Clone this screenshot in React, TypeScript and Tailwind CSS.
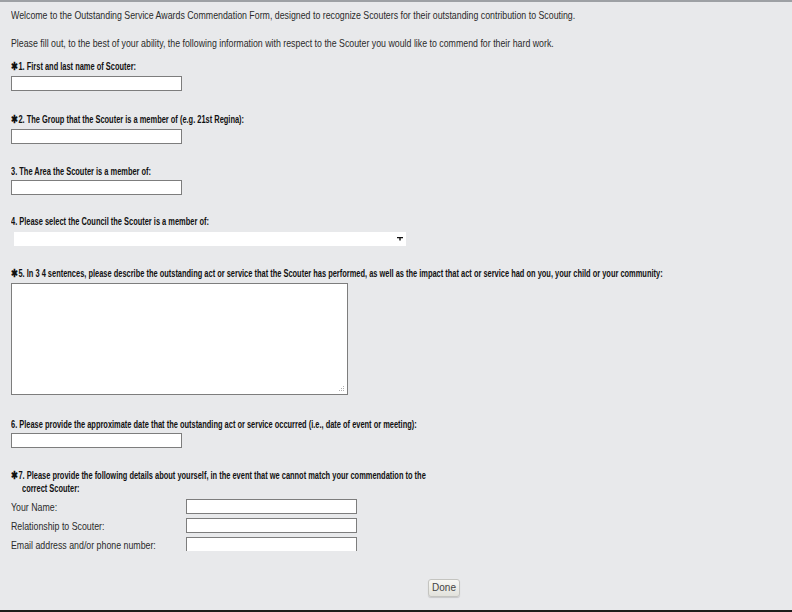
import React from 'react'

const font = { fontFamily: '"Liberation Sans", Arial, sans-serif' }

function Plain({ children }: { children: React.ReactNode }) {
  return (
    <div className="block w-max origin-left scale-x-[0.8] whitespace-nowrap text-[11px] leading-[14px] text-[#2a2a2a]">
      {children}
    </div>
  )
}

function Label({ req, children }: { req?: boolean; children: React.ReactNode }) {
  return (
    <div className="w-max h-[14px] origin-left scale-x-[0.745] whitespace-nowrap text-[10px] leading-[14px] font-bold text-[#111]">
      {req && <span className="text-[11px] mr-[1px]">✱</span>}
      {children}
    </div>
  )
}

function Field({ className = '' }: { className?: string }) {
  return <div className={`h-[15px] w-[171px] bg-white border border-[#7d7d7d] ${className}`} />
}

export default function App() {
  return (
    <div style={font} className="w-[792px] h-[612px] bg-[#e8e9eb] border-t-2 border-t-[#9da0a4] border-b-2 border-b-[#1c1c1c] flex flex-col overflow-hidden text-[11px] leading-[14px]">
      <div className="h-[549px] overflow-hidden px-[11px]">
        <div className="mt-[6px]">
          <Plain>
            Welcome to the Outstanding Service Awards Commendation Form, designed to recognize Scouters for their outstanding contribution to Scouting.
          </Plain>
        </div>
        <div className="mt-[14px]">
          <Plain>
            Please fill out, to the best of your ability, the following information with respect to the Scouter you would like to commend for their hard work.
          </Plain>
        </div>

        <div className="mt-[9px]">
          <Label req>1. First and last name of Scouter:</Label>
          <Field className="mt-[3px]" />
        </div>

        <div className="mt-[21px]">
          <Label req>2. The Group that the Scouter is a member of (e.g. 21st Regina):</Label>
          <Field className="mt-[3px]" />
        </div>

        <div className="mt-[21px]">
          <Label>3. The Area the Scouter is a member of:</Label>
          <Field className="mt-[1px]" />
        </div>

        <div className="mt-[20px]">
          <Label>4. Please select the Council the Scouter is a member of:</Label>
          <div className="mt-[3px] ml-[3px] h-[14px] w-[392px] bg-white flex items-center justify-end pr-[3px]">
            <svg width="6" height="4" viewBox="0 0 6 4">
              <path d="M0 0.5h6M3 0.5v3" stroke="#111" strokeWidth="1.4" fill="none" />
            </svg>
          </div>
        </div>

        <div className="mt-[20px]">
          <Label req>
            5. In 3 4 sentences, please describe the outstanding act or service that the Scouter has performed, as well as the impact that act or service had on you, your child or your community:
          </Label>
          <div className="mt-[3px] relative h-[112px] w-[337px] bg-white border border-[#7d7d7d]">
            <svg className="absolute right-[2px] bottom-[2px]" width="6" height="6" viewBox="0 0 6 6">
              <rect x="4" y="0" width="1" height="1" fill="#b0b0b0" />
              <rect x="4" y="2" width="1" height="1" fill="#b0b0b0" />
              <rect x="2" y="2" width="1" height="1" fill="#b0b0b0" />
              <rect x="4" y="4" width="1" height="1" fill="#b0b0b0" />
              <rect x="2" y="4" width="1" height="1" fill="#b0b0b0" />
              <rect x="0" y="4" width="1" height="1" fill="#b0b0b0" />
            </svg>
          </div>
        </div>

        <div className="mt-[23px]">
          <Label>
            6. Please provide the approximate date that the outstanding act or service occurred (i.e., date of event or meeting):
          </Label>
          <Field className="mt-[1px]" />
        </div>

        <div className="mt-[20px]">
          <Label req>
            7. Please provide the following details about yourself, in the event that we cannot match your commendation to the
          </Label>
          <div className="pl-[11px]">
            <Label>correct Scouter:</Label>
          </div>
          <div className="mt-[3px] grid grid-cols-[175px_171px] gap-y-[4px] items-center">
            <Plain>Your Name:</Plain>
            <Field />
            <Plain>Relationship to Scouter:</Plain>
            <Field />
            <Plain>Email address and/or phone number:</Plain>
            <Field />
          </div>
        </div>
      </div>

      <div className="flex-1 pt-[28px] pl-[428px]">
        <button className="h-[18px] w-[32px] rounded-[3px] border border-[#c4c4c0] bg-gradient-to-b from-[#f7f7f3] to-[#e2e2dc] text-[10px] leading-none text-[#444] shadow-[0_1px_1px_rgba(0,0,0,0.15)]">
          Done
        </button>
      </div>
    </div>
  )
}
